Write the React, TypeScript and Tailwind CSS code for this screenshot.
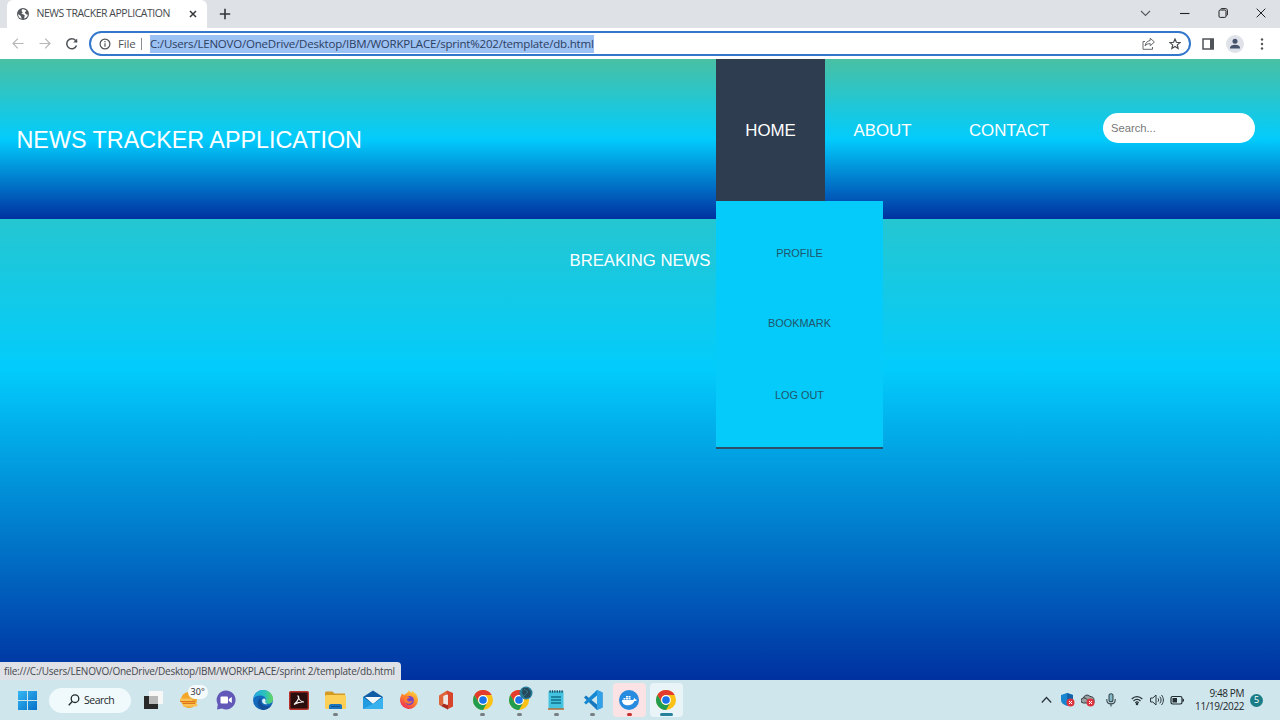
import type { ReactNode } from "react";

function ChromeLogo() {
  return (
    <svg className="h-5 w-5" viewBox="0 0 20 20">
      <circle cx="10" cy="10" r="10" fill="#fbc116" />
      <path d="M1.34 5A10 10 0 0 1 18.66 5H10a5 5 0 0 0-4.33 7.5z" fill="#e33b2e" />
      <path d="M1.34 5A10 10 0 0 0 10 20l4.33-7.5a5 5 0 0 1-8.66 0z" fill="#219d50" />
      <circle cx="10" cy="10" r="4.9" fill="#fff" />
      <circle cx="10" cy="10" r="3.8" fill="#1a73e8" />
    </svg>
  );
}

function Task({ children, mark = "", box = "" }: { children: ReactNode; mark?: string; box?: string }) {
  return (
    <div className={`relative flex h-[34px] w-[33px] shrink-0 items-center justify-center rounded ${box}`}>
      {children}
      {mark && <span className={`absolute bottom-px h-[3px] rounded-full ${mark}`} />}
    </div>
  );
}

function TabStrip() {
  return (
    <div className="flex h-7 items-stretch bg-[#dee1e6]">
      <div className="ml-[7px] flex w-[200px] items-center rounded-t-md bg-white pl-[10px] text-[#45494d]">
        <svg className="h-3 w-3" viewBox="0 0 12 12">
          <circle cx="6" cy="6" r="6" fill="#55595e" />
          <path d="M5.2 1.2 4.5 3l1.300 1.400-1.600 1.200 2 .6 1.600 1.300-.8 2.900c2-.2 3.500-1.700 3.900-3.600L9 6.200 7.800 4.500l1.500-1.800C8 1.500 6.500 1 5.200 1.200zM1.100 6c-.1 2.500 1.500 4.300 3.600 4.800L3.800 8z" fill="#fff" />
        </svg>
        <span className="ml-[7.500px] w-[140.500px] whitespace-nowrap text-[10.5px] tracking-[-0.47px]">NEWS TRACKER APPLICATION</span>
        <svg className="ml-[12px] h-2 w-2" viewBox="0 0 8 8" stroke="#34373a" strokeWidth="1.5"><path d="m1 1 6 6m0-6L1 7" /></svg>
      </div>
      <svg className="ml-[12px] mt-[8px] h-3 w-3" viewBox="0 0 12 12" stroke="#34373a" strokeWidth="1.6"><path d="M6 .8v10.4M.8 6h10.4" /></svg>
      <div className="ml-auto flex items-center gap-[27px] pr-[14px] pb-[3px]">
        <svg className="mr-px h-[10px] w-[11px]" viewBox="0 0 11 10" fill="none" stroke="#555a60" strokeWidth="1.1"><path d="m1 3 4.5 4.5L10 3" /></svg>
        <svg className="mr-px h-[10px] w-[11px]" viewBox="0 0 11 10" stroke="#222" strokeWidth="1.1"><path d="M1 5.5h9.5" /></svg>
        <svg className="mr-px h-[10px] w-[10px]" viewBox="0 0 10 10" fill="none" stroke="#222"><rect x="1" y="2" width="7" height="7.4" rx="1.2" /><path d="M2.5 1.2C3 .7 3.5.6 4 .6h3.7c1 0 1.7.7 1.7 1.7V6c0 .8-.2 1.3-.8 1.7" /></svg>
        <svg className="h-[10px] w-[10px]" viewBox="0 0 10 10" stroke="#222"><path d="m.7.7 8.6 8.6m0-8.6L.7 9.3" /></svg>
      </div>
    </div>
  );
}

function Toolbar() {
  return (
    <div className="flex h-[31px] items-center bg-white">
      <svg className="ml-3 h-[11px] w-3" viewBox="0 0 12 11" fill="none" stroke="#b4b6b8" strokeWidth="1.2"><path d="M11.5 5.5H1M5.8.7 1 5.5l4.8 4.8" /></svg>
      <svg className="ml-[15px] h-[11px] w-3" viewBox="0 0 12 11" fill="none" stroke="#b4b6b8" strokeWidth="1.2"><path d="M.5 5.5H11M6.2.7 11 5.5l-4.8 4.8" /></svg>
      <svg className="ml-[15px] h-3 w-3" viewBox="0 0 12 12" fill="none" stroke="#505458" strokeWidth="1.5"><path d="M10.5 7.5A5 5 0 1 1 9.6 2.5L11 4" /><path d="M11.2.4v4H7.2z" fill="#505458" stroke="none" /></svg>
      <div className="ml-[11px] flex h-[25px] w-[1102px] items-center rounded-full border-2 border-[#3277cc] bg-white pl-[8px] text-[11.5px] text-[#50545a]">
        <svg className="h-3 w-3" viewBox="0 0 12 12" fill="none" stroke="#505458" strokeWidth="1.2"><circle cx="6" cy="6" r="4.9" /><path d="M6 5.3v3.4M6 3.1v1.2" /></svg>
        <span className="ml-[7px] w-[18px] whitespace-nowrap tracking-[-0.2px]">File</span>
        <span className="ml-[5px] h-3 w-px bg-[#8b8e92]" />
        <span className="ml-[8px] flex h-[18px] w-[444px] items-center whitespace-nowrap bg-[#9cc1f3] text-[#2c4060]"><span className="tracking-[-0.2px]">C:/Users/LENOVO/OneDrive/Desktop/IBM/WORKPLACE/sprint%202/template/db.html</span></span>
        <svg className="ml-auto h-[13px] w-[13px]" viewBox="0 0 13 13" fill="none" stroke="#65686c"><path d="M3 4.5H1v7.8h9.5V10" /><path d="M8.2 1.2 12.4 5 8.2 8.8V6.6c-2.4 0-4 .7-5.1 2.3.4-2.7 1.8-4.9 5.1-5.4z" /></svg>
        <svg className="ml-[14px] mr-[8px] h-3 w-3" viewBox="0 0 12 12" fill="none" stroke="#45494d" strokeWidth="1.2"><path d="m6 1 1.4 3.300 3.600.3-2.700 2.300.8 3.500L6 8.500l-3.100 1.900.8-3.500L1 4.600l3.600-.3z" /></svg>
      </div>
      <svg className="ml-[11px] h-3 w-3" viewBox="0 0 12 12"><rect x="1" y="1" width="10.3" height="10" fill="none" stroke="#505458" strokeWidth="1.5" /><path d="M8 1h3.5v10H8z" fill="#505458" /></svg>
      <svg className="ml-[12px] h-[18px] w-[18px]" viewBox="0 0 18 18"><circle cx="9" cy="9" r="9" fill="#dfe2e9" /><circle cx="9" cy="6.3" r="2.5" fill="#45536b" /><path d="M4 13.5v-1c0-1.7 2.4-2.8 5-2.8s5 1.1 5 2.8v1z" fill="#45536b" /></svg>
      <svg className="ml-[16px] h-3 w-1" viewBox="0 0 4 12" fill="#505458"><circle cx="2" cy="1.5" r="1.2" /><circle cx="2" cy="6" r="1.2" /><circle cx="2" cy="10.5" r="1.2" /></svg>
    </div>
  );
}

function Page() {
  return (
    <main className="relative h-[621px] bg-[linear-gradient(#49c0a3,#02ccfc_50%,#0031a0)] font-['Liberation_Sans',sans-serif] text-white">
      <header className="flex h-[160px] bg-[linear-gradient(#49c0a3,#02ccfc_50%,#0031a0)]">
        <h1 className="ml-[16.5px] mt-[67px] w-[699.5px] whitespace-nowrap text-[23.35px] leading-[28px]">NEWS TRACKER APPLICATION</h1>
        <nav className="flex h-[142px] items-center text-[16.87px]">
          <a className="flex h-full w-[109px] items-center justify-center bg-[#2e3d50] pt-px">HOME</a>
          <a className="flex h-full w-[115px] items-center justify-center pt-px">ABOUT</a>
          <a className="flex h-full w-[138px] items-center justify-center pt-px">CONTACT</a>
        </nav>
        <input className="ml-[25px] mt-[54px] h-[30px] w-[152px] rounded-full bg-white px-[8px] text-[11.2px] text-gray-700 placeholder:text-[#777]" placeholder="Search..." />
      </header>
      <h2 className="ml-[569.5px] mt-[32px] whitespace-nowrap text-[16.7px] leading-5">BREAKING NEWS</h2>
      <div className="absolute left-[716px] top-[142px] flex h-[248px] w-[167px] flex-col border-b-2 border-[#2b5067] bg-[#04cbf9] pt-[17px] text-[10.9px] text-[#20556d]">
        <a className="flex h-[71px] items-center justify-center">PROFILE</a>
        <a className="flex h-[69px] items-center justify-center">BOOKMARK</a>
        <a className="flex h-[75px] items-center justify-center">LOG OUT</a>
      </div>
      <div className="absolute bottom-0 left-0 flex h-[18px] w-[401px] items-center rounded-tr-sm bg-[#dee1e6] pl-[4px] font-['Open_Sans','Noto_Sans',sans-serif] text-[10px] text-[#45494e]"><span className="whitespace-nowrap tracking-[-0.23px]">file:///C:/Users/LENOVO/OneDrive/Desktop/IBM/WORKPLACE/sprint 2/template/db.html</span></div>
    </main>
  );
}

function Taskbar() {
  const dot = "w-[5px] bg-[#777f83]";
  return (
    <footer className="flex h-10 items-center bg-[#cfe6ec] text-[#1d272b]">
      <svg className="ml-[18px] h-[19px] w-[19px]" viewBox="0 0 19 19"><defs><linearGradient id="win" x2="1" y2="1"><stop stopColor="#35b7f2" /><stop offset="1" stopColor="#0871c9" /></linearGradient></defs><path d="M0 0h9v9H0zm10 0h9v9h-9zM0 10h9v9H0zm10 0h9v9h-9z" fill="url(#win)" /></svg>
      <div className="ml-[12px] flex h-[25px] w-[82px] items-center rounded-full bg-[#f0f9fc] pl-[19px] text-[10.5px]">
        <svg className="h-3 w-3" viewBox="0 0 12 12" fill="none" stroke="#202a2e" strokeWidth="1.3"><circle cx="7" cy="4.7" r="3.8" /><path d="M4.2 7.5.7 11.2" /></svg>
        <span className="ml-1 mt-px tracking-[-0.5px]">Search</span>
      </div>
      <div className="ml-[5px] flex gap-[3.7px]">
        <Task><svg className="h-5 w-5" viewBox="0 0 20 20"><path d="M6 1h14v13H6z" fill="#f7f7f7" /><path d="M1 6h14v13H1z" fill="#292929" /><path d="M6 6h9v8H6z" fill="#b9b9b9" /></svg></Task>
        <Task>
          <svg className="h-5 w-5" viewBox="0 0 20 20"><circle cx="10" cy="10" r="8" fill="#f4a62a" /><path d="M1 8.5h11a1.5 1.5 0 0 1 0 3H1zm3 5h13a1 1 0 0 1 0 3H4z" fill="#f9c254" /><path d="M1 11.5h15m-12 2h12" stroke="#dc7620" /></svg>
          <span className="absolute left-[15px] top-[2px] flex h-[14px] w-[20px] items-center justify-center rounded-full bg-[#f5fafc] text-[9px]">30°</span>
        </Task>
        <Task><svg className="h-5 w-5" viewBox="0 0 20 20"><path d="M10 .5a9.5 9.5 0 1 1-4 18.1l-5 1 .8-5A9.5 9.5 0 0 1 10 .5z" fill="#6258b8" /><rect x="4.5" y="6.5" width="7.5" height="7" rx="1" fill="#fff" /><path d="m12.800 9 3-2v6l-3-2z" fill="#fff" /></svg></Task>
        <Task><svg className="h-5 w-5" viewBox="0 0 20 20"><defs><linearGradient id="edge"><stop stopColor="#22a4e3" /><stop offset=".6" stopColor="#2bc3bb" /><stop offset="1" stopColor="#66d65c" /></linearGradient></defs><circle cx="10" cy="10" r="10" fill="#1269bd" /><path d="M.2 9C1.2 2.5 6 0 10 0c6 0 10 4.2 10 8.8 0 3-2 5-4.6 5-2.4 0-3.6-1-2.9-2.2C14.5 8 11 5.5 7 5.5 3.5 5.5 1 7.5.2 9z" fill="url(#edge)" /><path d="M7.500 10c0 4.500 4 7 9.500 5.800l1.500-.8c-2 4-6.500 5-9 5C5.500 18 4 14 5 11c.6-2 2.500-3 4-3-.8.400-1.500 1-1.500 2z" fill="#134f98" /><path d="M9 11c0-1.5 1-2.5 2-2.600 1.500.1 2.200 1.600 1.500 3.200-.5 1.200.5 2 2 2.300-3 .9-5.500-.4-5.500-2.900z" fill="#d6edf2" /></svg></Task>
        <Task><svg className="h-[19px] w-5" viewBox="0 0 20 19"><rect x=".7" y=".7" width="18.6" height="17.6" rx="1" fill="#2a0e0d" stroke="#b8322b" strokeWidth="1.4" /><path d="M5 13.500c2.500-1.500 6-3 10-2.500-3-.3-5.500-3-6-6 1.600.3.700 5-4 8.500z" fill="none" stroke="#eee" strokeWidth="1.2" /></svg></Task>
        <Task mark={dot}><svg className="h-[19px] w-[21px]" viewBox="0 0 21 19"><path d="M0 2c0-1 .5-1.5 1.500-1.500h6l2 2H20V9H0z" fill="#d49b24" /><rect y="4" width="21" height="14" rx="1.5" fill="#fcd057" /><path d="M4 18v-3c0-1 .7-2 2-2h9c1.300 0 2 .9 2 2v3z" fill="#1975be" /><path d="M6 15.500h9" stroke="#0d528f" /></svg></Task>
        <Task><svg className="h-5 w-5" viewBox="0 0 20 20"><path d="M0 7 10 .5 20 7v11.500H0z" fill="#105da5" /><path d="M2 7h16.500L10 14z" fill="#f4f9fb" /><path d="m0 7 10 7 10 5H0z" fill="#209be0" /><path d="m20 7-10 7-10 5h20z" fill="#38b2ee" /></svg></Task>
        <Task><svg className="h-5 w-5" viewBox="0 0 20 20"><defs><linearGradient id="ff" x1=".8" x2=".2" y2="1"><stop stopColor="#ffd944" /><stop offset=".45" stopColor="#ff8a26" /><stop offset="1" stopColor="#ed245c" /></linearGradient></defs><path d="M3 3.500 5 5l3-2 2-2.500L12.500 3 13 1c4 2 6 5 6 9.500A9 9 0 1 1 1.500 7z" fill="url(#ff)" /><circle cx="10.3" cy="10.5" r="4.6" fill="#7844c8" /><path d="M5 6.500c2.500-1 4.500 0 6 1.500-2 0-3 .8-3 2 1.500 2 3.500 2 5.500.5-.3 3.500-5.500 4.500-8 1z" fill="#ff7c2d" /></svg></Task>
        <Task><svg className="h-5 w-5" viewBox="0 0 20 20"><path d="M3 5.500 11 .5v4L7.500 6v7.500L4.800 16 3 14.500z" fill="#df6538" /><path d="m11 .5 6 2.500v13.500L11 19.500z" fill="#d8432b" /><path d="m5 16 2.500-2.500L12 15v4.500z" fill="#a82b20" /><path d="M7.500 6 12 4.500V15l-4.500-1.500z" fill="#efe6e3" /></svg></Task>
        <Task mark={dot}><ChromeLogo /></Task>
        <Task mark={dot}><ChromeLogo /><svg className="absolute left-[16px] top-[3px] h-[14px] w-[14px]" viewBox="0 0 14 14"><circle cx="7" cy="7" r="6.500" fill="#257b98" /><path d="M4 2h5l3 4-1 5-5 1-3-5z" fill="#25495b" /><path d="m5 3 4 3-4 4" stroke="#35778c" fill="none" /></svg></Task>
        <Task mark={dot}><svg className="h-5 w-4" viewBox="0 0 16 20"><rect x=".5" y="1" width="15" height="18" rx="1" fill="#43c3df" /><path d="M1.500 1.500h14" stroke="#194d62" strokeWidth="2.500" strokeDasharray="1.200 1.200" /><path d="M3 7h10M3 10h10M3 13h10" stroke="#11728c" strokeWidth="1.3" /><path d="M0 19h16" stroke="#b56b34" strokeWidth="1.500" /></svg></Task>
        <Task mark={dot}><svg className="h-5 w-5" viewBox="0 0 20 20"><path d="m14 0 5.500 2.500v15L14 20 1 7.500 3 5.500l11 9z" fill="#1678be" /><path d="m14 5.500-11 9-2-2L14 0z" fill="#1588d1" /><path d="m14 0 5.500 2.500v15L14 20z" fill="#32a2e8" /></svg></Task>
        <Task mark="w-[5px] bg-[#c52f2f]" box="bg-[#fbe3e5]"><svg className="h-5 w-5" viewBox="0 0 20 20"><circle cx="10" cy="10" r="10" fill="#278be0" /><path d="M3 10h11c.8 0 .8-1.700 1.300-2 .8.400 1 1 .9 1.600.7-.1 1.200 0 1.800.3-.7 1-1.500 1.200-2.500 1.200-1.500 3-3.500 4.200-6.500 4.200-4 0-6-2-6-5.300zM4.500 8h2v1.500h-2zM7 8h2v1.500H7zm2.500 0h2v1.500h-2zM7 6h2v1.500H7zm2.500 0h2v1.500h-2z" fill="#fff" /></svg></Task>
        <Task mark="w-[13px] bg-[#27819a]" box="bg-[#e8f4f7]"><ChromeLogo /></Task>
      </div>
      <div className="ml-auto flex items-center">
        <svg className="h-3 w-[11px]" viewBox="0 0 11 12" fill="none" stroke="#263238" strokeWidth="1.2"><path d="m.8 8.500 4.700-5 4.700 5" /></svg>
        <svg className="ml-[9px] h-[14px] w-[14px]" viewBox="0 0 14 14"><path d="m6 0 6 2v5c0 3-2 4.500-6 6-4-1.500-6-3-6-6V2z" fill="#1785cf" /><path d="m6 0 6 2v4.500H6z" fill="#1463aa" /><circle cx="9.5" cy="9.5" r="4" fill="#dc3540" /><path d="m8 8 3 3m0-3-3 3" stroke="#fff" /></svg>
        <svg className="ml-[6px] h-[14px] w-[14px]" viewBox="0 0 14 14"><path d="M2.500 10a2.500 2.500 0 0 1 0-5C3 2 7 1 9 3.500c2-.2 4 1 4 3.500v3z" fill="#9a9fa1" stroke="#303a3e" /><path d="M3 5c2 0 3 1 4 3" fill="none" stroke="#303a3e" /><circle cx="9.5" cy="9.5" r="4" fill="#dc3540" /><path d="m8 8 3 3m0-3-3 3" stroke="#fff" /></svg>
        <svg className="ml-[10px] h-[14px] w-3" viewBox="0 0 12 14" fill="none" stroke="#37484f" strokeWidth="1.1"><rect x="4" y=".7" width="4" height="8" rx="2" fill="#83b9c6" /><path d="M1.800 6v.7c0 5.500 8.400 5.500 8.400 0V6M6 11v2.500" /></svg>
        <svg className="ml-[14px] h-3 w-3" viewBox="0 0 12 12" fill="none" stroke="#27343a" strokeWidth="1.2"><path d="M.7 5c3-3.300 7.600-3.300 10.600 0M2.500 7c2-2.100 5-2.100 7 0M4.300 8.800c1-1 2.400-1 3.400 0" /><circle cx="6" cy="10" r=".7" fill="#27343a" /></svg>
        <svg className="ml-[7px] h-3 w-[14px]" viewBox="0 0 14 12" fill="none" stroke="#27343a"><path d="M.6 4h2.200L6 1v10L2.800 8H.6zM8 4.300c.8 1 .8 2.400 0 3.400M9.800 2.700c1.700 2 1.700 4.600 0 6.600M11.500 1c2.500 3 2.500 7 0 10" /></svg>
        <svg className="ml-[6px] h-3 w-[15px]" viewBox="0 0 15 12"><rect x="1" y="2.5" width="11" height="7.5" rx="1.7" fill="none" stroke="#202c31" strokeWidth="1.2" /><path d="M2.500 4H7v4.500H2.500zM12.500 4.500c2 0 2 3.500 0 3.500z" fill="#202c31" /></svg>
        <div className="ml-[11px] flex w-[48px] flex-col items-end whitespace-nowrap text-[10px] leading-[13px] tracking-[-0.42px]"><span>9:48 PM</span><span>11/19/2022</span></div>
        <span className="ml-[6px] mr-[17px] flex h-[13px] w-[13px] items-center justify-center rounded-full bg-[#1b7d87] text-[9px] text-white">5</span>
      </div>
    </footer>
  );
}

export default function App() {
  return (
    <div className="h-[720px] w-[1280px] overflow-hidden font-['Open_Sans','Noto_Sans',sans-serif]">
      <TabStrip />
      <Toolbar />
      <Page />
      <Taskbar />
    </div>
  );
}
